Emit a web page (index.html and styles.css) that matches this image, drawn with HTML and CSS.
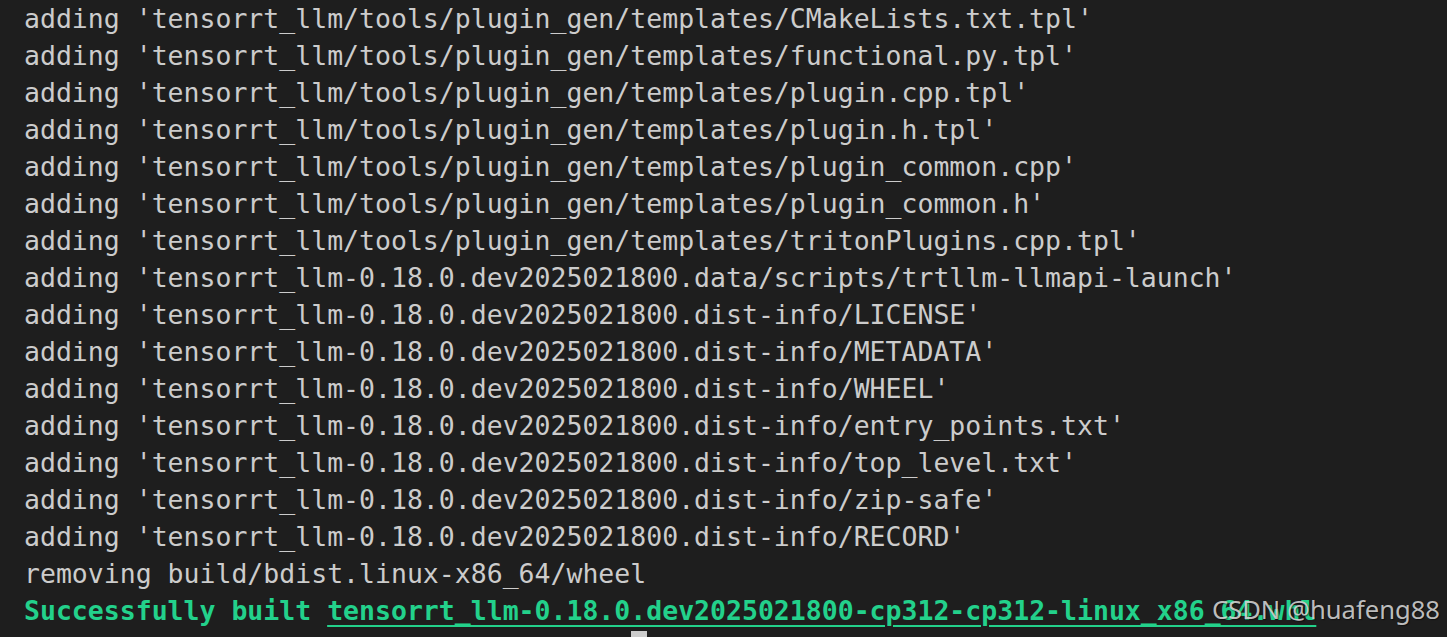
FILE: index.html
```html
<!DOCTYPE html>
<html>
<head>
<meta charset="utf-8">
<link rel="stylesheet" href="styles.css">
</head>
<body>
<div class="term">
<div class="line">adding 'tensorrt_llm/tools/plugin_gen/templates/CMakeLists.txt.tpl'</div>
<div class="line">adding 'tensorrt_llm/tools/plugin_gen/templates/functional.py.tpl'</div>
<div class="line">adding 'tensorrt_llm/tools/plugin_gen/templates/plugin.cpp.tpl'</div>
<div class="line">adding 'tensorrt_llm/tools/plugin_gen/templates/plugin.h.tpl'</div>
<div class="line">adding 'tensorrt_llm/tools/plugin_gen/templates/plugin_common.cpp'</div>
<div class="line">adding 'tensorrt_llm/tools/plugin_gen/templates/plugin_common.h'</div>
<div class="line">adding 'tensorrt_llm/tools/plugin_gen/templates/tritonPlugins.cpp.tpl'</div>
<div class="line">adding 'tensorrt_llm-0.18.0.dev2025021800.data/scripts/trtllm-llmapi-launch'</div>
<div class="line">adding 'tensorrt_llm-0.18.0.dev2025021800.dist-info/LICENSE'</div>
<div class="line">adding 'tensorrt_llm-0.18.0.dev2025021800.dist-info/METADATA'</div>
<div class="line">adding 'tensorrt_llm-0.18.0.dev2025021800.dist-info/WHEEL'</div>
<div class="line">adding 'tensorrt_llm-0.18.0.dev2025021800.dist-info/entry_points.txt'</div>
<div class="line">adding 'tensorrt_llm-0.18.0.dev2025021800.dist-info/top_level.txt'</div>
<div class="line">adding 'tensorrt_llm-0.18.0.dev2025021800.dist-info/zip-safe'</div>
<div class="line">adding 'tensorrt_llm-0.18.0.dev2025021800.dist-info/RECORD'</div>
<div class="line">removing build/bdist.linux-x86_64/wheel</div>
<div class="line ok">Successfully built <span class="link">tensorrt_llm-0.18.0.dev2025021800-cp312-cp312-linux_x86_64.whl</span></div>
<div class="line"><span class="pad"></span><span class="cursor"></span></div>
</div>
<div class="watermark">CSDN @huafeng88</div>
</body>
</html>
```
FILE: styles.css
```css
html, body {
  margin: 0;
  padding: 0;
  background: #1e1e1e;
  height: 100%;
  overflow: hidden;
}
.term {
  padding-left: 24px;
  font-family: "DejaVu Sans Mono", "Liberation Mono", monospace;
  font-size: 26.5px;
  color: #cccccc;
}
.line {
  height: 37px;
  line-height: 37px;
  white-space: pre;
}
.ok {
  color: #23d18b;
  font-weight: bold;
}
.link {
  text-decoration: underline;
  text-decoration-thickness: 2px;
  text-underline-offset: 5px;
}
.pad {
  display: inline-block;
  width: 607px;
}
.cursor {
  display: inline-block;
  width: 16px;
  height: 37px;
  margin-top: 2px;
  vertical-align: top;
  background: #cccccc;
}
.watermark {
  position: absolute;
  right: 7px;
  bottom: 12px;
  font-family: "Noto Sans", "Liberation Sans", sans-serif;
  font-size: 25.6px;
  line-height: 30px;
  color: rgba(220, 220, 220, 0.85);
  text-shadow: 1px 1px 1px rgba(0, 0, 0, 0.5);
}
```
